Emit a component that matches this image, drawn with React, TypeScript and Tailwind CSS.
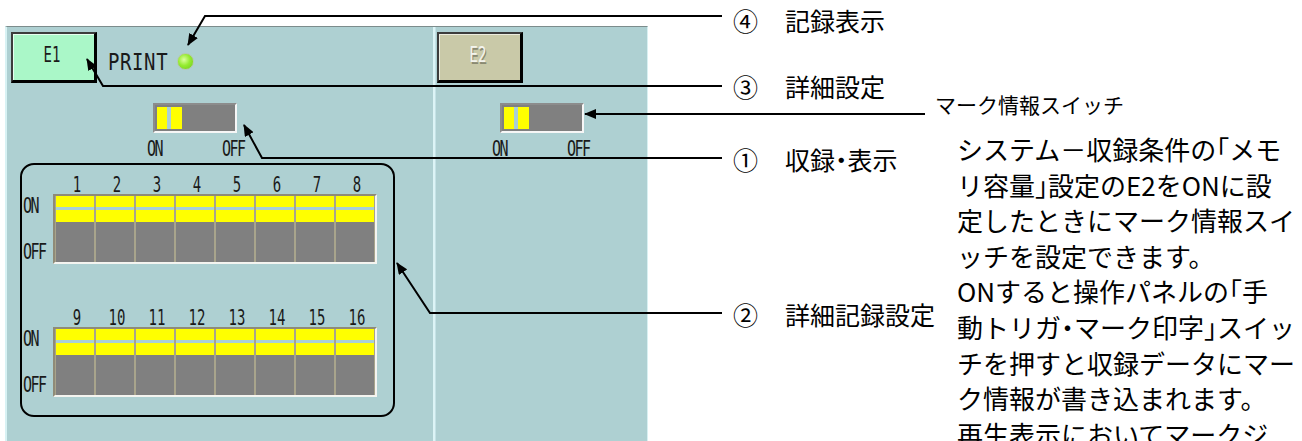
const mono = "font-['DejaVu_Sans_Mono',monospace]"
const jp = "font-['Noto_Sans_CJK_JP','Noto_Sans',sans-serif]"

function OnOffSwitch() {
  return (
    <div className="flex h-[30px] w-[84px] border-2 border-t-[#8c8c8c] border-l-[#8c8c8c] border-b-[#f6f6f6] border-r-[#f6f6f6] bg-[#808080] p-[2px]">
      <div className="w-[10px] bg-[#ffff00]" />
      <div className="w-[4px] bg-[#a9cfd6]" />
      <div className="w-[11px] bg-[#ffff00]" />
    </div>
  )
}

function GuiText({ children, className = '' }: { children: React.ReactNode; className?: string }) {
  return <span className={`${mono} block origin-top scale-y-[1.45] leading-none text-[#1a1a1a] ${className}`}>{children}</span>
}

// narrow brackets / middle dot, like the proportional font in the original
function Jp({ text }: { text: string }) {
  const parts = text.split(/([「」・])/)
  return (
    <>
      {parts.map((p, i) =>
        /[「」・]/.test(p) ? (
          <span key={i} className="[font-feature-settings:'halt']">{p}</span>
        ) : (
          <span key={i}>{p}</span>
        )
      )}
    </>
  )
}

function DipRow({ nums }: { nums: number[] }) {
  return (
    <div>
      <div className="ml-[35px] flex h-[18px]">
        {nums.map((n) => (
          <div key={n} className="flex w-[40px] justify-center">
            <GuiText className="text-[14px]">{n}</GuiText>
          </div>
        ))}
      </div>
      <div className="mt-[1px] flex">
        <div className="ml-[1px] flex w-[30px] flex-col justify-between pt-[2px] pb-[7px]">
          <GuiText className="text-[15px] tracking-[-1.5px]">ON</GuiText>
          <GuiText className="text-[15px] tracking-[-1.5px]">OFF</GuiText>
        </div>
        <div className="flex h-[70px] w-[324px] border-2 border-t-[#8f8b78] border-l-[#8f8b78] border-b-[#f4f4f0] border-r-[#f4f4f0]">
          {nums.map((n) => (
            <div key={n} className="flex w-[40px] flex-col border-x border-x-[#a8a48c]">
              <div className="h-[11px] bg-[#ffff00]" />
              <div className="h-[3px] bg-[#a9cfd6]" />
              <div className="h-[12px] bg-[#ffff00]" />
              <div className="flex-1 bg-[#808080]" />
            </div>
          ))}
        </div>
      </div>
    </div>
  )
}

function Led() {
  return (
    <div className="h-[17px] w-[17px] rounded-full border border-[#b8c8ac] bg-[radial-gradient(circle_at_40%_38%,#dcffa0_0%,#96ec30_45%,#6cc81c_100%)]" />
  )
}

function OnOffLabels({ className = '' }: { className?: string }) {
  return (
    <div className={`flex h-[20px] ${className}`}>
      <div className="flex w-[75px]">
        <GuiText className="text-[15px] tracking-[-1.5px]">ON</GuiText>
      </div>
      <GuiText className="text-[15px] tracking-[-1.5px]">OFF</GuiText>
    </div>
  )
}

export default function App() {
  const paragraph = [
    'システム－収録条件の「メモ',
    'リ容量」設定のE2をONに設',
    '定したときにマーク情報スイ',
    'ッチを設定できます。',
    'ONすると操作パネルの「手',
    '動トリガ・マーク印字」スイッ',
    'チを押すと収録データにマー',
    'ク情報が書き込まれます。',
    '再生表示においてマークジ',
  ]

  return (
    <div className="relative flex h-[441px] w-[1302px] overflow-hidden bg-white">
      {/* panel */}
      <div className="ml-[5px] mt-[26px] flex h-[420px] w-[643px] border-t border-t-[#7c8c8c] border-l-2 border-l-[#d8f2f4] border-r border-r-[#d8f0f2] bg-[#aed0d2]">
        {/* E1 */}
        <div className="w-[426px] shrink-0">
          <div className="ml-[4px] mt-[5px] flex items-start">
            <div className="flex h-[51px] w-[86px] justify-center border-2 border-[#3c3c3c] border-b-[3px] border-r-[3px] border-b-black border-r-black bg-[#aaf7c8] pt-[11px] shadow-[inset_1px_1px_0_#e6fff0]">
              <GuiText className="-ml-[3px] text-[14px]">E1</GuiText>
            </div>
            <GuiText className="ml-[11px] mt-[18px] text-[19px] !scale-y-[1.25] tracking-[0.6px]">PRINT</GuiText>
            <div className="ml-[9px] mt-[21px]">
              <Led />
            </div>
          </div>
          <div className="ml-[146px] mt-[20px]">
            <OnOffSwitch />
          </div>
          <OnOffLabels className="ml-[140px] mt-[6px]" />
          <div className="ml-[13px] mt-[4px] h-[254px] w-[375px] rounded-[14px] border-2 border-black">
            <div className="mt-[10px]">
              <DipRow nums={[1, 2, 3, 4, 5, 6, 7, 8]} />
            </div>
            <div className="mt-[44px]">
              <DipRow nums={[9, 10, 11, 12, 13, 14, 15, 16]} />
            </div>
          </div>
        </div>
        {/* E2 */}
        <div className="flex-1 border-l-2 border-l-[#dcf4f6] shadow-[inset_1px_0_0_#c4e2e6]">
          <div className="ml-[2px] mt-[5px] flex h-[51px] w-[86px] justify-center border-2 border-[#3c3c3c] border-b-[3px] border-r-[3px] border-b-black border-r-black bg-[#c9c9a8] pt-[11px] shadow-[inset_1px_1px_0_#ecece0]">
            <GuiText className="-ml-[3px] text-[14px] text-[#f4f4ee] [text-shadow:1px_1px_0_#8a8a72]">E2</GuiText>
          </div>
          <div className="ml-[65px] mt-[20px]">
            <OnOffSwitch />
          </div>
          <OnOffLabels className="ml-[57px] mt-[6px]" />
        </div>
      </div>

      {/* callout labels */}
      <div className={`${jp} ml-[85px] w-[202px] shrink-0 text-[25px] leading-[36px] text-black`}>
        <div className="mt-[2px] flex whitespace-nowrap"><span className="w-[52px]">④</span>記録表示</div>
        <div className="mt-[30px] flex whitespace-nowrap"><span className="w-[52px]">③</span>詳細設定</div>
        <div className="mt-[37px] flex whitespace-nowrap"><span className="w-[52px]">①</span><span><Jp text="収録・表示" /></span></div>
        <div className="mt-[119px] flex whitespace-nowrap"><span className="w-[52px]">②</span>詳細記録設定</div>
      </div>

      {/* description */}
      <div className={`${jp} shrink-0 text-black`}>
        <div className="mt-[90px] whitespace-nowrap text-[21px] leading-[28px]">マーク情報スイッチ</div>
        <div className="ml-[22px] mt-[13px] text-[26px] leading-[35.6px]">
          {paragraph.map((line) => (
            <div key={line} className="whitespace-nowrap"><Jp text={line} /></div>
          ))}
        </div>
      </div>

      {/* leader lines */}
      <svg className="pointer-events-none absolute inset-0" width="1302" height="441">
        <defs>
          <marker id="tip" viewBox="0 0 12 10" refX="11" refY="5" markerWidth="12" markerHeight="10" markerUnits="userSpaceOnUse" orient="auto-start-reverse">
            <path d="M0 0 L12 5 L0 10 Z" fill="black" />
          </marker>
        </defs>
        <g fill="none" stroke="black" strokeWidth="2">
          <polyline points="722,16 205,16 188,45" markerEnd="url(#tip)" />
          <polyline points="722,86 103,86 87,59" markerEnd="url(#tip)" />
          <polyline points="925,114 585,114" markerEnd="url(#tip)" />
          <polyline points="722,158 262,158 244,125" markerEnd="url(#tip)" />
          <polyline points="722,313 430,313 397,263" markerEnd="url(#tip)" />
        </g>
      </svg>
    </div>
  )
}
